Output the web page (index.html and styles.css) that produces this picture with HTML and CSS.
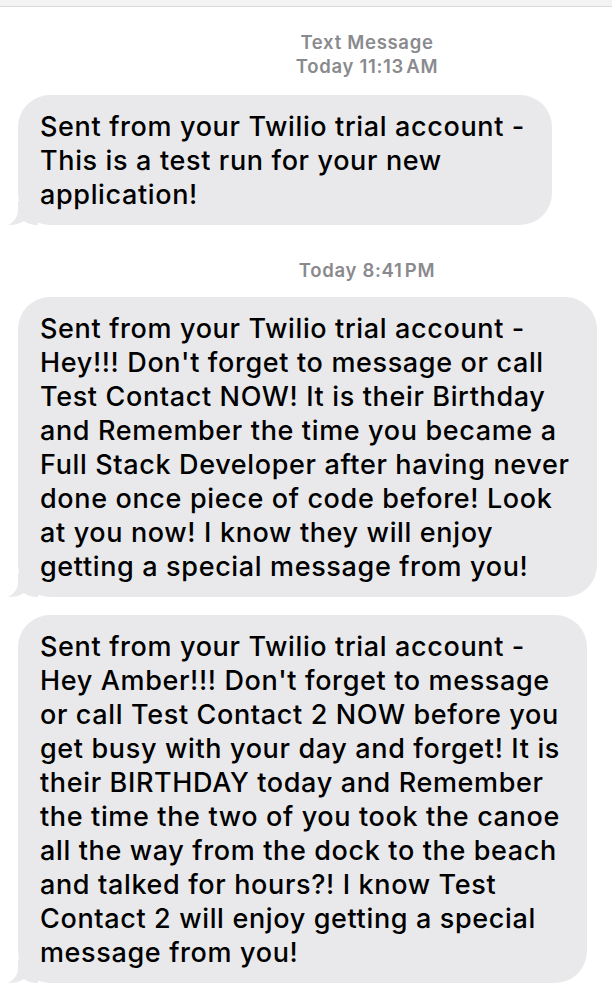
FILE: index.html
```html
<!DOCTYPE html>
<html>
<head>
<meta charset="utf-8">
<link rel="stylesheet" href="styles.css">
</head>
<body>
<div class="topbar"></div>
<main class="thread">
  <div class="stamp stamp-first">
    <div>Text Message</div>
    <div>Today 11:13&#8202;AM</div>
  </div>
  <div class="bubble b1">
    <p>Sent from your Twilio trial account -<br>This is a test run for your new<br>application!</p>
    <svg class="tail" width="30" height="24" viewBox="0 0 30 24"><path d="M10 0 L10 9 C10 16 6 21 0 24 C6 24 11 23 16 20 C19 22 23 24 30 24 L30 0 Z"/></svg>
  </div>
  <div class="stamp stamp-second">
    <div>Today 8:41&#8202;PM</div>
  </div>
  <div class="bubble b2">
    <p>Sent from your Twilio trial account -<br>Hey!!! Don't forget to message or call<br>Test Contact NOW! It is their Birthday<br>and Remember the time you became a<br>Full Stack Developer after having never<br>done once piece of code before! Look<br>at you now! I know they will enjoy<br>getting a special message from you!</p>
    <svg class="tail" width="30" height="24" viewBox="0 0 30 24"><path d="M10 0 L10 9 C10 16 6 21 0 24 C6 24 11 23 16 20 C19 22 23 24 30 24 L30 0 Z"/></svg>
  </div>
  <div class="bubble b3">
    <p>Sent from your Twilio trial account -<br>Hey Amber!!! Don't forget to message<br>or call Test Contact 2 NOW before you<br>get busy with your day and forget! It is<br>their BIRTHDAY today and Remember<br>the time the two of you took the canoe<br>all the way from the dock to the beach<br>and talked for hours?! I know Test<br>Contact 2 will enjoy getting a special<br>message from you!</p>
    <svg class="tail" width="30" height="24" viewBox="0 0 30 24"><path d="M10 0 L10 9 C10 16 6 21 0 24 C6 24 11 23 16 20 C19 22 23 24 30 24 L30 0 Z"/></svg>
  </div>
</main>
</body>
</html>
```
FILE: styles.css
```css
html, body {
  margin: 0;
  padding: 0;
  background: #ffffff;
}
body {
  font-family: Inter, "Liberation Sans", sans-serif;
  -webkit-font-smoothing: antialiased;
}
.topbar {
  height: 6px;
  background: #f3f3f3;
  border-bottom: 1px solid #dadada;
}
.thread {
  display: flex;
  flex-direction: column;
  align-items: flex-start;
  padding: 0 0 0 18px;
}
.stamp {
  align-self: stretch;
  padding-left: 104px;
  text-align: center;
  color: #8a8a8e;
  font-size: 18.5px;
  font-weight: 600;
  line-height: 24px;
  letter-spacing: 0.7px;
}
.stamp-first {
  margin-top: 23px;
  margin-bottom: 17px;
}
.stamp-second {
  margin-top: 33px;
  margin-bottom: 15px;
}
.bubble {
  position: relative;
  background: #e9e9eb;
  border-radius: 32px;
  padding: 15px 27px 13px 22px;
}
.tail {
  position: absolute;
  left: -10px;
  bottom: 0;
  fill: #e9e9eb;
}
.bubble p {
  position: relative;
  z-index: 1;
  margin: 0;
  font-size: 27px;
  line-height: 34px;
  font-weight: 500;
  color: #000;
  letter-spacing: 0.64px;
  white-space: nowrap;
}
.b2 {
  margin-bottom: 18px;
}
```
